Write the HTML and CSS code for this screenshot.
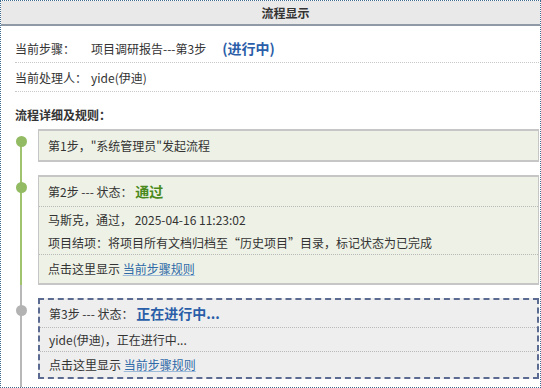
FILE: index.html
```html
<!DOCTYPE html>
<html lang="zh-CN">
<head>
  <meta charset="UTF-8">
  <title>流程显示</title>
  <link rel="stylesheet" href="styles.css">
</head>
<body>
  <div class="frame">
    <div class="title-bar">流程显示</div>
    <div class="info">
      <div class="info-row first">
        <span class="label">当前步骤：</span>
        <span class="value">项目调研报告---第3步</span>
        <span class="state">(进行中)</span>
      </div>
      <div class="info-row">
        <span class="label">当前处理人：</span>
        <span class="value">yide(伊迪)</span>
      </div>
    </div>
    <div class="section-title">流程详细及规则：</div>
    <ul class="timeline">
      <li class="step done">
        <div class="box">
          <div class="row">第1步，"系统管理员"发起流程</div>
        </div>
      </li>
      <li class="step done">
        <div class="box">
          <div class="row head">第2步 --- 状态： <span class="pass">通过</span></div>
          <div class="row body">
            <div>马斯克，通过， 2025-04-16 11:23:02</div>
            <div>项目结项：将项目所有文档归档至“历史项目”目录，标记状态为已完成</div>
          </div>
          <div class="row">点击这里显示 <a href="#">当前步骤规则</a></div>
        </div>
      </li>
      <li class="step current">
        <div class="box">
          <div class="row head">第3步 --- 状态： <span class="running">正在进行中...</span></div>
          <div class="row body">
            <div>yide(伊迪)，正在进行中...</div>
          </div>
          <div class="row">点击这里显示 <a href="#">当前步骤规则</a></div>
        </div>
      </li>
    </ul>
  </div>
</body>
</html>
```

FILE: styles.css
```css
body {
  margin: 0;
  font-family: "Noto Sans CJK SC", "Liberation Sans", sans-serif;
  font-size: 12px;
  color: #333;
  background: #fff;
}
.frame {
  width: 541px;
  height: 388px;
  box-sizing: border-box;
  border: 1px dotted #3f6a8e;
  overflow: hidden;
}
.title-bar {
  height: 23px;
  line-height: 23px;
  background: #e9e9e9;
  border-bottom: 2px solid #8f9aa6;
  text-align: center;
  font-weight: bold;
  padding-left: 30px;
}
.info {
  margin: 8px 1px 0 14px;
}
.info-row {
  display: flex;
  align-items: center;
  height: 28px;
  border-bottom: 1px dotted #c8c8c8;
}
.label {
  width: 76px;
}
.state {
  margin-left: 16px;
  color: #2b5ea8;
  font-weight: bold;
  font-size: 14px;
}
.section-title {
  margin: 14px 0 0 14px;
  font-weight: bold;
  line-height: 18px;
}
.timeline {
  list-style: none;
  margin: 5px 1px 0 0;
  padding: 0 0 0 37px;
}
.step {
  position: relative;
  margin-bottom: 13px;
}
.step::before {
  content: "";
  position: absolute;
  left: -22px;
  top: 7px;
  width: 11px;
  height: 11px;
  border-radius: 50%;
  background: #93bb63;
  z-index: 1;
}
.step::after {
  content: "";
  position: absolute;
  left: -18px;
  top: 0;
  bottom: -13px;
  width: 2px;
  background: #9fc36f;
}
.step:first-child::after {
  top: 12px;
}
.step.done:nth-child(2)::after {
  bottom: 0;
}
.step.current::before {
  background: #b3b3b3;
}
.step.current::after {
  top: -13px;
  bottom: -40px;
  background: #b8b8b8;
}
.box {
  background: #eef2e6;
  border: 1px solid #c6c6c6;
  border-top-width: 2px;
  border-bottom-width: 2px;
}
.row {
  padding: 0 9px;
  line-height: 28px;
  border-bottom: 1px dotted #b9b9b9;
}
.row:last-child {
  border-bottom: none;
}
.box > .row:only-child {
  line-height: 29px;
}
.row.body {
  line-height: 23px;
  padding-top: 1px;
}
.pass {
  color: #4a8a1c;
  font-weight: bold;
  font-size: 14px;
}
.running {
  color: #2b5ea8;
  font-weight: bold;
  font-size: 14px;
}
a {
  color: #2f6aa8;
  text-decoration: underline;
  text-decoration-color: #9dbbd9;
}
.current .box {
  background: #eeeeee;
  border: 2px dashed #5a6a90;
}
.current .row.head {
  line-height: 27px;
}
.current .row.body {
  line-height: 22px;
}
.current .row:last-child {
  line-height: 25px;
}
```
